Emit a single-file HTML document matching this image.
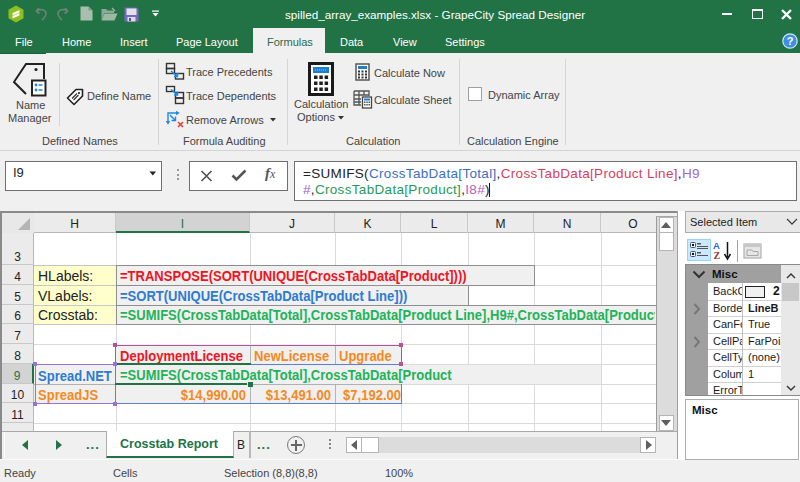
<!DOCTYPE html>
<html><head><meta charset="utf-8">
<style>
*{margin:0;padding:0;box-sizing:border-box}
html,body{width:800px;height:482px;overflow:hidden;background:#f0f0f0;font-family:"Liberation Sans",sans-serif;}
.a{position:absolute;white-space:nowrap}
.t{font-size:11px;color:#444;line-height:14px}
.wt{color:#fff;font-size:11px;line-height:14px}
.sep{position:absolute;width:1px;background:#d5d5d5}
.ch{position:absolute;top:213px;height:20px;font-size:12px;line-height:22px;text-align:center;color:#222;background:#ebebeb;border-right:1px solid #c8c8c8;border-bottom:1px solid #b8b8b8}
.ch.sel{background:#d3d3d3;border-bottom:2px solid #217346;color:#217346}
.rh{position:absolute;left:2px;width:32px;font-size:12px;text-align:center;color:#222;background:#ebebeb;border-bottom:1px solid #c8c8c8;border-right:1px solid #b8b8b8;overflow:hidden}
.rh span{position:absolute;left:0;right:0;bottom:0px;line-height:14px}
.rh.sel{background:#d3d3d3;border-right:2px solid #217346;color:#217346}
.gv{position:absolute;top:233px;width:1px;height:198px;background:#dadada}
.gh{position:absolute;left:34px;width:622px;height:1px;background:#dadada}
.cell{position:absolute;font-weight:bold;font-size:14px;line-height:16px;transform:scaleX(.93);transform-origin:0 0}
.cell.r{transform-origin:100% 0}
</style></head><body>
<!-- green title + tabs -->
<div class="a" style="left:0;top:0;width:800px;height:53px;background:#217346"></div>
<div class="a wt" style="left:285px;top:8px;font-size:11.7px">spilled_array_examples.xlsx - GrapeCity Spread Designer</div>
<!-- tabs -->
<div class="a wt" style="left:15px;top:35px">File</div>
<div class="a wt" style="left:62px;top:35px">Home</div>
<div class="a wt" style="left:120px;top:35px">Insert</div>
<div class="a wt" style="left:176px;top:35px">Page Layout</div>
<div class="a" style="left:253px;top:28px;width:72px;height:25px;background:#f0f0f0"></div>
<div class="a t" style="left:267px;top:35px;color:#2b6b4f">Formulas</div>
<div class="a wt" style="left:340px;top:35px">Data</div>
<div class="a wt" style="left:393px;top:35px">View</div>
<div class="a wt" style="left:445px;top:35px">Settings</div>

<!-- ribbon -->
<div class="a" style="left:0;top:53px;width:800px;height:98px;background:#f0f0f0;border-bottom:1px solid #d4d4d4"></div>
<div class="a t" style="left:16px;top:98px">Name</div>
<div class="a t" style="left:8px;top:111px">Manager</div>
<div class="sep" style="left:59px;top:63px;height:63px"></div>
<div class="a t" style="left:87px;top:89px">Define Name</div>
<div class="a t" style="left:42px;top:134px">Defined Names</div>
<div class="sep" style="left:158px;top:59px;height:86px"></div>
<div class="a t" style="left:186px;top:65px">Trace Precedents</div>
<div class="a t" style="left:186px;top:89px">Trace Dependents</div>
<div class="a t" style="left:186px;top:113px">Remove Arrows</div>
<div class="a t" style="left:183px;top:134px">Formula Auditing</div>
<div class="sep" style="left:287px;top:59px;height:86px"></div>
<div class="a t" style="left:294px;top:97px">Calculation</div>
<div class="a t" style="left:297px;top:110px">Options</div>
<div class="a t" style="left:374px;top:66px">Calculate Now</div>
<div class="a t" style="left:374px;top:93px">Calculate Sheet</div>
<div class="a t" style="left:346px;top:134px">Calculation</div>
<div class="sep" style="left:459px;top:59px;height:86px"></div>
<div class="a" style="left:468px;top:87px;width:14px;height:14px;background:#fff;border:1px solid #a0a0a0"></div>
<div class="a t" style="left:488px;top:88px">Dynamic Array</div>
<div class="a t" style="left:467px;top:134px">Calculation Engine</div>
<div class="sep" style="left:565px;top:59px;height:86px"></div>

<div class="a" style="left:0;top:53px;width:46px;height:1px;background:#1d5e3a"></div>
<!-- formula bar -->
<div class="a" style="left:5px;top:161px;width:157px;height:30px;background:#fff;border:1px solid #707070"></div>
<div class="a" style="left:13px;top:165px;font-size:13px;color:#222">I9</div>
<div class="a" style="left:189px;top:161px;width:99px;height:30px;background:#fff;border:1px solid #707070"></div>
<div class="a" style="left:294px;top:161px;width:503px;height:40px;background:#fff;border:1px solid #707070"></div>
<div class="a" style="left:303px;top:166px;font-size:13.5px;line-height:16px;letter-spacing:0.32px;color:#222">=SUMIFS(<span style="color:#3b6fc4">CrossTabData[Total]</span>,<span style="color:#d8415c">CrossTabData[Product Line]</span>,<span style="color:#9a66d6">H9</span><br><span style="color:#9b59d0">#</span>,<span style="color:#1f9a5a">CrossTabData[Product]</span>,<span style="color:#b85cc0">I8#</span>)<span style="display:inline-block;width:1px;height:14px;background:#111;vertical-align:-3px;margin-left:-0.5px"></span></div>

<!-- grid -->
<div class="a" style="left:0;top:211px;width:678px;height:249px;background:#e8e8e8;border-top:2px solid #8a8a8a;border-left:2px solid #8a8a8a"></div>
<div class="a" style="left:34px;top:233px;width:622px;height:198px;background:#fff"></div>

<!-- gridcontent -->
<svg class="a" style="left:17px;top:217px" width="14" height="14"><path d="M13 1 L13 13 L1 13 Z" fill="#b4b4b4"/></svg>
<div class="ch" style="left:34px;width:82px">H</div>
<div class="ch sel" style="left:116px;width:134px">I</div>
<div class="ch" style="left:250px;width:85px">J</div>
<div class="ch" style="left:335px;width:66px">K</div>
<div class="ch" style="left:401px;width:67px">L</div>
<div class="ch" style="left:468px;width:66px">M</div>
<div class="ch" style="left:534px;width:67px">N</div>
<div class="ch" style="left:601px;width:65px">O</div>
<div class="rh" style="top:233px;height:32px"><span>3</span></div>
<div class="rh" style="top:265px;height:20px"><span>4</span></div>
<div class="rh" style="top:285px;height:20px"><span>5</span></div>
<div class="rh" style="top:305px;height:19px"><span>6</span></div>
<div class="rh" style="top:324px;height:20px"><span>7</span></div>
<div class="rh" style="top:344px;height:20px"><span>8</span></div>
<div class="rh sel" style="top:364px;height:20px"><span>9</span></div>
<div class="rh" style="top:384px;height:19px"><span>10</span></div>
<div class="rh" style="top:403px;height:20px"><span>11</span></div>
<div class="rh" style="top:423px;height:20px"><span style="bottom:-2px">12</span></div>
<div class="gv" style="left:116px"></div>
<div class="gv" style="left:250px"></div>
<div class="gv" style="left:335px"></div>
<div class="gv" style="left:401px"></div>
<div class="gv" style="left:468px"></div>
<div class="gv" style="left:534px"></div>
<div class="gv" style="left:601px"></div>
<div class="gh" style="top:265px"></div>
<div class="gh" style="top:285px"></div>
<div class="gh" style="top:305px"></div>
<div class="gh" style="top:324px"></div>
<div class="gh" style="top:344px"></div>
<div class="gh" style="top:364px"></div>
<div class="gh" style="top:384px"></div>
<div class="gh" style="top:403px"></div>
<div class="gh" style="top:423px"></div>

<!-- cells -->
<div class="a" style="left:34px;top:265px;width:83px;height:60px;background:#ffffcc;border:1px solid #c4c4c4;border-left:none"></div>
<div class="a" style="left:34px;top:285px;width:82px;height:1px;background:#c8c8c8"></div>
<div class="a" style="left:34px;top:305px;width:82px;height:1px;background:#c8c8c8"></div>
<div class="cell" style="left:38px;top:268px;font-weight:normal;color:#222;transform:none">HLabels:</div>
<div class="cell" style="left:38px;top:288px;font-weight:normal;color:#222;transform:none">VLabels:</div>
<div class="cell" style="left:38px;top:307px;font-weight:normal;color:#222;transform:none">Crosstab:</div>
<!-- spill boxes -->
<div class="a" style="left:116px;top:265px;width:419px;height:21px;background:#f0f0f0;border:1px solid #8e8e8e"></div>
<div class="a" style="left:116px;top:285px;width:353px;height:21px;background:#f0f0f0;border:1px solid #8e8e8e"></div>
<div class="a" style="left:116px;top:305px;width:545px;height:20px;background:#f0f0f0;border:1px solid #8e8e8e;border-right:none"></div>
<div class="cell" style="left:120px;top:268px;color:#f0141e">=TRANSPOSE(SORT(UNIQUE(CrossTabData[Product])))</div>
<div class="cell" style="left:120px;top:288px;color:#2e7bd0">=SORT(UNIQUE(CrossTabData[Product Line]))</div>
<div class="a" style="left:117px;top:306px;width:538px;height:18px;overflow:hidden"><div class="cell" style="left:3px;top:1px;color:#1fb35a">=SUMIFS(CrossTabData[Total],CrossTabData[Product Line],H9#,CrossTabData[Product],I8#)</div></div>
<!-- row 8-10 -->
<div class="a" style="left:116px;top:344px;width:286px;height:20px;background:#f0f0f0"></div>
<div class="a" style="left:34px;top:364px;width:567px;height:20px;background:#f0f0f0"></div>
<div class="a" style="left:34px;top:384px;width:368px;height:19px;background:#f0f0f0"></div>
<div class="a" style="left:250px;top:345px;width:1px;height:19px;background:#b4b4b4"></div>
<div class="a" style="left:335px;top:345px;width:1px;height:19px;background:#b4b4b4"></div>
<div class="a" style="left:250px;top:385px;width:1px;height:18px;background:#b4b4b4"></div>
<div class="a" style="left:335px;top:385px;width:1px;height:18px;background:#b4b4b4"></div>
<div class="a" style="left:116px;top:364px;width:485px;height:1px;background:#dadada"></div>
<div class="a" style="left:34px;top:384px;width:368px;height:1px;background:#dadada"></div>
<div class="cell" style="left:120px;top:348px;color:#f0141e">DeploymentLicense</div>
<div class="cell" style="left:254px;top:348px;color:#f58a1f">NewLicense</div>
<div class="cell" style="left:339px;top:348px;color:#f58a1f">Upgrade</div>
<div class="cell" style="left:38px;top:368px;color:#2e7bd0">Spread.NET</div>
<div class="cell" style="left:38px;top:387px;color:#f58a1f">SpreadJS</div>
<div class="a" style="left:117px;top:366px;width:484px;height:18px;overflow:hidden"><div class="cell" style="left:3px;top:1px;color:#1fb35a">=SUMIFS(CrossTabData[Total],CrossTabData[Product</div></div>
<div class="cell r" style="left:120px;top:387px;width:126px;text-align:right;color:#f58a1f">$14,990.00</div>
<div class="cell r" style="left:254px;top:387px;width:77px;text-align:right;color:#f58a1f">$13,491.00</div>
<div class="cell r" style="left:339px;top:387px;width:58px;text-align:right;color:#f58a1f">$7,192.00</div>
<!-- reference borders -->
<div class="a" style="left:34px;top:384px;width:82px;height:1px;background:#b0b0b0"></div>
<div class="a" style="left:251px;top:384px;width:150px;height:1px;background:#b0b0b0"></div>
<div class="a" style="left:115px;top:345px;width:287px;height:20px;border:1px solid #b8509a;border-bottom:none"></div>
<div class="a" style="left:35px;top:364px;width:81px;height:40px;border:1px solid #9a70d0;border-right:none"></div>
<div class="a" style="left:115px;top:364px;width:287px;height:40px;border:1px solid #5b7fd6;border-right:none"></div>
<div class="a" style="left:401px;top:384px;width:1px;height:20px;background:#5b7fd6"></div>
<div class="a" style="left:115px;top:363px;width:136px;height:2px;background:#217346"></div>
<div class="a" style="left:115px;top:383px;width:132px;height:2px;background:#217346"></div>
<div class="a" style="left:248px;top:382px;width:5px;height:5px;background:#217346"></div>
<div class="a" style="left:113px;top:343px;width:4px;height:4px;background:#b8509a"></div>
<div class="a" style="left:399px;top:343px;width:4px;height:4px;background:#b8509a"></div>
<div class="a" style="left:399px;top:362px;width:4px;height:4px;background:#b8509a"></div>
<div class="a" style="left:113px;top:362px;width:4px;height:4px;background:#9a70d0"></div>
<div class="a" style="left:33px;top:362px;width:4px;height:4px;background:#9a70d0"></div>
<div class="a" style="left:33px;top:402px;width:4px;height:4px;background:#9a70d0"></div>
<div class="a" style="left:113px;top:402px;width:4px;height:4px;background:#9a70d0"></div>
<!-- vertical scrollbar -->
<div class="a" style="left:656px;top:213px;width:21px;height:218px;background:#dcdcdc;border-left:1px solid #9a9a9a"></div>
<div class="a" style="left:656px;top:213px;width:21px;height:4px;background:#f0f0f0;border-bottom:1px solid #a8a8a8"></div>
<div class="a" style="left:659px;top:217px;width:15px;height:16px;background:#fff;border:1px solid #b4b4b4"></div>
<div class="a" style="left:661px;top:222px;width:0;height:0;border-left:5px solid transparent;border-right:5px solid transparent;border-bottom:6px solid #606060"></div>
<div class="a" style="left:659px;top:232px;width:15px;height:19px;background:#fff;border:1px solid #b4b4b4"></div>
<div class="a" style="left:659px;top:415px;width:15px;height:16px;background:#fff;border:1px solid #b4b4b4"></div>
<div class="a" style="left:661px;top:420px;width:0;height:0;border-left:5px solid transparent;border-right:5px solid transparent;border-top:6px solid #606060"></div>
<div class="a" style="left:677px;top:211px;width:1px;height:249px;background:#a0a0a0"></div>
<!-- sheet tab bar -->
<div class="a" style="left:2px;top:431px;width:675px;height:29px;background:#f0f0f0;border-top:1px solid #a8a8a8"></div>
<div class="a" style="left:4px;top:432px;width:1px;height:26px;background:#fafafa"></div>
<div class="a" style="left:0;top:459px;width:678px;height:1px;background:#fafafa"></div>
<div class="a" style="left:22px;top:440px;width:0;height:0;border-top:5px solid transparent;border-bottom:5px solid transparent;border-right:6px solid #217346"></div>
<div class="a" style="left:56px;top:440px;width:0;height:0;border-top:5px solid transparent;border-bottom:5px solid transparent;border-left:6px solid #217346"></div>
<div class="a" style="left:86px;top:437px;font-size:13px;font-weight:bold;color:#217346;letter-spacing:1px">...</div>
<div class="a" style="left:106px;top:431px;width:128px;height:27px;background:#fff;border-left:1px solid #b0b0b0;border-right:1px solid #b0b0b0;border-bottom:2px solid #217346"></div>
<div class="a" style="left:120px;top:436px;font-size:12.5px;font-weight:bold;color:#217346;line-height:16px">Crosstab Report</div>
<div class="a" style="left:237px;top:437px;font-size:12px;color:#222;line-height:16px">B</div>
<div class="a" style="left:249px;top:431px;width:2px;height:27px;background:#b8b8b8"></div>
<div class="a" style="left:257px;top:437px;font-size:13px;font-weight:bold;color:#217346;letter-spacing:1px">...</div>
<div class="a" style="left:287px;top:436px;width:18px;height:18px;border:1.5px solid #7a7a7a;border-radius:50%"></div>
<div class="a" style="left:290.5px;top:444px;width:11px;height:2px;background:#666"></div>
<div class="a" style="left:295px;top:439.5px;width:2px;height:11px;background:#666"></div>
<div class="a" style="left:329px;top:439px;width:2px;height:2px;background:#888"></div>
<div class="a" style="left:329px;top:443px;width:2px;height:2px;background:#888"></div>
<div class="a" style="left:329px;top:447px;width:2px;height:2px;background:#888"></div>
<div class="a" style="left:346px;top:437px;width:310px;height:16px;background:#dcdcdc"></div>
<div class="a" style="left:346px;top:437px;width:16px;height:16px;background:#fff;border:1px solid #b4b4b4"></div>
<div class="a" style="left:351px;top:440px;width:0;height:0;border-top:5px solid transparent;border-bottom:5px solid transparent;border-right:6px solid #606060"></div>
<div class="a" style="left:361px;top:437px;width:18px;height:16px;background:#fff;border:1px solid #b4b4b4"></div>
<div class="a" style="left:640px;top:437px;width:16px;height:16px;background:#fff;border:1px solid #b4b4b4"></div>
<div class="a" style="left:646px;top:440px;width:0;height:0;border-top:5px solid transparent;border-bottom:5px solid transparent;border-left:6px solid #606060"></div>
<!-- /gridcontent -->

<!-- right panel -->
<div class="a" style="left:678px;top:211px;width:122px;height:249px;background:#fff"></div>
<div class="a" style="left:685px;top:211px;width:115px;height:22px;background:#e8e8e8;border:1px solid #adadad;border-right:none"></div>
<div class="a" style="left:690px;top:215px;font-size:11px;color:#222;line-height:14px">Selected Item</div>
<svg class="a" style="left:786px;top:218px" width="12" height="8"><path d="M1 1 L6 6 L11 1" fill="none" stroke="#444" stroke-width="1.3"/></svg>
<div class="a" style="left:687px;top:239px;width:24px;height:22px;background:#cce8ff;border:1px solid #99d1ff"></div>
<div class="a" style="left:737px;top:240px;width:1px;height:22px;background:#a0a0a0"></div>
<!-- property grid -->
<div class="a" style="left:685px;top:264px;width:115px;height:132px;background:#a0a0a0;border:1px solid #8a8a8a;border-right:none"></div>
<div class="a" style="left:781px;top:265px;width:19px;height:130px;background:#e8e8e8"></div>
<div class="a" style="left:782px;top:283px;width:17px;height:18px;background:#c8c8c8"></div>
<svg class="a" style="left:786px;top:272px" width="10" height="7"><path d="M1 6 L5 2 L9 6" fill="none" stroke="#333" stroke-width="1.4"/></svg>
<svg class="a" style="left:786px;top:385px" width="10" height="7"><path d="M1 1 L5 5 L9 1" fill="none" stroke="#333" stroke-width="1.4"/></svg>
<svg class="a" style="left:692px;top:270px" width="14" height="9"><path d="M1.5 1.5 L7 7 L12.5 1.5" fill="none" stroke="#333" stroke-width="2"/></svg>
<div class="a" style="left:712px;top:266px;font-size:11.5px;font-weight:bold;color:#111;line-height:16px">Misc</div>
<div class="a" style="left:708px;top:283px;width:73px;height:112px;background:#fff"></div>
<svg class="a" style="left:693px;top:303px" width="8" height="12"><path d="M1.5 1 L6 6 L1.5 11" fill="none" stroke="#777" stroke-width="2"/></svg>
<svg class="a" style="left:693px;top:336px" width="8" height="12"><path d="M1.5 1 L6 6 L1.5 11" fill="none" stroke="#777" stroke-width="2"/></svg>
<div class="a" style="left:708px;top:283px;width:34px;height:16px;overflow:hidden"><div class="a" style="left:5px;top:1px;font-size:11px;line-height:14px;color:#1a1a1a">BackC(</div></div>
<div class="a" style="left:708px;top:300px;width:34px;height:16px;overflow:hidden"><div class="a" style="left:5px;top:1px;font-size:11px;line-height:14px;color:#1a1a1a">Borde</div></div>
<div class="a" style="left:743px;top:300px;width:38px;height:16px;overflow:hidden"><div class="a" style="left:5px;top:1px;font-size:11px;line-height:14px;color:#1a1a1a;font-weight:bold;">LineB</div></div>
<div class="a" style="left:708px;top:300px;width:73px;height:1px;background:#d0d0d0"></div>
<div class="a" style="left:708px;top:316px;width:34px;height:16px;overflow:hidden"><div class="a" style="left:5px;top:1px;font-size:11px;line-height:14px;color:#1a1a1a">CanFo</div></div>
<div class="a" style="left:743px;top:316px;width:38px;height:16px;overflow:hidden"><div class="a" style="left:5px;top:1px;font-size:11px;line-height:14px;color:#1a1a1a;">True</div></div>
<div class="a" style="left:708px;top:316px;width:73px;height:1px;background:#d0d0d0"></div>
<div class="a" style="left:708px;top:333px;width:34px;height:16px;overflow:hidden"><div class="a" style="left:5px;top:1px;font-size:11px;line-height:14px;color:#1a1a1a">CellPa</div></div>
<div class="a" style="left:743px;top:333px;width:38px;height:16px;overflow:hidden"><div class="a" style="left:5px;top:1px;font-size:11px;line-height:14px;color:#1a1a1a;">FarPoir</div></div>
<div class="a" style="left:708px;top:333px;width:73px;height:1px;background:#d0d0d0"></div>
<div class="a" style="left:708px;top:349px;width:34px;height:16px;overflow:hidden"><div class="a" style="left:5px;top:1px;font-size:11px;line-height:14px;color:#1a1a1a">CellTy</div></div>
<div class="a" style="left:743px;top:349px;width:38px;height:16px;overflow:hidden"><div class="a" style="left:5px;top:1px;font-size:11px;line-height:14px;color:#1a1a1a;">(none)</div></div>
<div class="a" style="left:708px;top:349px;width:73px;height:1px;background:#d0d0d0"></div>
<div class="a" style="left:708px;top:366px;width:34px;height:16px;overflow:hidden"><div class="a" style="left:5px;top:1px;font-size:11px;line-height:14px;color:#1a1a1a">Colum</div></div>
<div class="a" style="left:743px;top:366px;width:38px;height:16px;overflow:hidden"><div class="a" style="left:5px;top:1px;font-size:11px;line-height:14px;color:#1a1a1a;">1</div></div>
<div class="a" style="left:708px;top:366px;width:73px;height:1px;background:#d0d0d0"></div>
<div class="a" style="left:708px;top:382px;width:34px;height:16px;overflow:hidden"><div class="a" style="left:5px;top:1px;font-size:11px;line-height:14px;color:#1a1a1a">ErrorT</div></div>
<div class="a" style="left:708px;top:382px;width:73px;height:1px;background:#d0d0d0"></div>
<div class="a" style="left:742px;top:283px;width:1px;height:112px;background:#c0c0c0"></div>
<div class="a" style="left:745px;top:286px;width:20px;height:12px;background:#f0f0f0;border:1.5px solid #222"></div>
<div class="a" style="left:773px;top:284px;font-size:12px;font-weight:bold;line-height:14px;color:#111">2</div>
<!-- description -->
<div class="a" style="left:685px;top:399px;width:114px;height:61px;background:#fff;border:1px solid #adadad"></div>
<div class="a" style="left:692px;top:403px;font-size:11.5px;font-weight:bold;color:#111;line-height:14px">Misc</div>

<!-- title icons -->
<svg class="a" style="left:8px;top:5px" width="16" height="18"><path d="M8 0.5 L15.5 4.75 L15.5 13.25 L8 17.5 L0.5 13.25 L0.5 4.75 Z" fill="#8cbf1f"/><path d="M4.5 8 L11.5 5 L11.5 7.5 L4.5 10.5 Z M4.5 11 L11.5 8 L11.5 10.5 L4.5 13.5Z" fill="#f4fbe8"/></svg>
<svg class="a" style="left:33px;top:5px" width="16" height="16"><path d="M3 6 L6 3 M3 6 L6.5 8.5 M3.5 6 C7 4 12 4 13 8 C13.5 11 11 13 9 15" fill="none" stroke="#6f8277" stroke-width="1.6"/></svg>
<svg class="a" style="left:55px;top:5px" width="16" height="16"><path d="M13 6 L10 3 M13 6 L9.5 8.5 M12.5 6 C9 4 4 4 3 8 C2.5 11 5 13 7 15" fill="none" stroke="#6f8277" stroke-width="1.6"/></svg>
<svg class="a" style="left:80px;top:6px" width="13" height="15"><path d="M0.5 0.5 L8.5 0.5 L12.5 4.5 L12.5 14.5 L0.5 14.5 Z" fill="#a9bfae"/><path d="M8.5 0.5 L8.5 4.5 L12.5 4.5" fill="#7f9a86"/></svg>
<svg class="a" style="left:101px;top:7px" width="17" height="14"><path d="M0.5 2 L5 2 L6.5 3.5 L13 3.5 L13 6 L3.5 6 L0.5 13 Z" fill="#8ba996"/><path d="M3.5 6.5 L16.5 6.5 L13.5 13.5 L0.5 13.5 Z" fill="#9db9a6"/><path d="M11 1 L14 4" stroke="#9db9a6" stroke-width="1.2"/></svg>
<svg class="a" style="left:124px;top:7px" width="15" height="15"><path d="M0.5 0.5 L12.5 0.5 L14.5 2.5 L14.5 14.5 L0.5 14.5 Z" fill="#7a68bd"/><rect x="2.5" y="1.5" width="10" height="6.5" fill="#e2e2ea"/><rect x="3.5" y="10" width="8" height="4.5" fill="#dcdce6"/><rect x="5" y="11" width="2" height="3" fill="#5a4a9a"/></svg>
<svg class="a" style="left:151px;top:10px" width="9" height="8"><rect x="1" y="0.5" width="7" height="1.2" fill="#fff"/><path d="M1.5 3 L7.5 3 L4.5 6.5Z" fill="#fff"/></svg>
<!-- window controls -->
<div class="a" style="left:722px;top:13px;width:10px;height:2px;background:#fff"></div>
<div class="a" style="left:752px;top:9px;width:11px;height:10px;border:1.5px solid #fff;border-top-width:2.5px"></div>
<svg class="a" style="left:781px;top:9px" width="11" height="11"><path d="M1 1 L10 10 M10 1 L1 10" stroke="#fff" stroke-width="2.4"/></svg>
<svg class="a" style="left:782px;top:33px" width="16" height="16"><circle cx="8" cy="8" r="7.2" fill="#3d8fe0" stroke="#d0e6fa" stroke-width="1.2"/><text x="8" y="12.3" text-anchor="middle" font-family="Liberation Sans" font-weight="bold" font-size="11" fill="#fff">?</text></svg>
<!-- ribbon icons -->
<svg class="a" style="left:12px;top:62px" width="36" height="36"><path d="M14 32 L2 20 L14 2 L32 2 L32 17" fill="none" stroke="#222" stroke-width="2"/><circle cx="24" cy="7.5" r="1.6" fill="#222"/><rect x="20" y="18.5" width="13.5" height="15" fill="#fff" stroke="#222" stroke-width="2"/><circle cx="24" cy="23" r="1.4" fill="#1e88e5"/><circle cx="24" cy="28" r="1.4" fill="#1e88e5"/><path d="M26.5 23 L30.5 23 M26.5 28 L30.5 28" stroke="#1e88e5" stroke-width="1.3"/></svg>
<svg class="a" style="left:66px;top:88px" width="18" height="18"><path d="M1.5 10 L10 1.5 L16.5 1.5 L16.5 8 L8 16.5 Z" fill="#fff" stroke="#222" stroke-width="1.6" stroke-linejoin="round"/><circle cx="13" cy="5" r="1.1" fill="#222"/><path d="M6 10.5 L11 5.5 M7.5 12 L12.5 7" stroke="#333" stroke-width="1.2"/></svg>
<svg class="a" style="left:165px;top:62px" width="20" height="19"><rect x="1.5" y="1.5" width="8" height="5" fill="none" stroke="#333" stroke-width="1.4"/><rect x="1.5" y="6.5" width="8" height="5" fill="none" stroke="#333" stroke-width="1.4"/><rect x="10.5" y="11.5" width="8" height="5.5" fill="none" stroke="#333" stroke-width="1.4"/><path d="M6 9 L12 14" stroke="#1e88e5" stroke-width="1.6"/><path d="M9 14.5 L12.5 14.5 L12.5 11" fill="none" stroke="#1e88e5" stroke-width="1.5"/></svg>
<svg class="a" style="left:165px;top:85px" width="20" height="20"><rect x="1.5" y="1.5" width="8" height="5" fill="none" stroke="#333" stroke-width="1.4"/><rect x="10.5" y="7.5" width="8" height="5.5" fill="none" stroke="#333" stroke-width="1.4"/><rect x="10.5" y="13" width="8" height="5.5" fill="none" stroke="#333" stroke-width="1.4"/><path d="M6 4.5 L12 9.5" stroke="#1e88e5" stroke-width="1.6"/><path d="M9 10 L12.5 10 L12.5 6.5" fill="none" stroke="#1e88e5" stroke-width="1.5"/></svg>
<svg class="a" style="left:165px;top:109px" width="20" height="20"><path d="M3 14 L3 4 L12 4" fill="none" stroke="#1e88e5" stroke-width="1.4"/><path d="M0.8 12 L3 15.8 L5.2 12 Z M11 1.8 L14.8 4 L11 6.2Z" fill="#1e88e5"/><path d="M5 6 L10 11" stroke="#1e88e5" stroke-width="1.5"/><path d="M6.5 11.5 L10.5 11.5 L10.5 7.5" fill="none" stroke="#1e88e5" stroke-width="1.4"/><path d="M13 13 L18 18 M18 13 L13 18" stroke="#e53935" stroke-width="1.5"/></svg>
<svg class="a" style="left:270px;top:118px" width="6" height="4"><path d="M0 0 L6 0 L3 3.5Z" fill="#333"/></svg>
<svg class="a" style="left:308px;top:62px" width="26" height="34"><rect x="1.5" y="1.5" width="23" height="31" fill="#fff" stroke="#1a1a1a" stroke-width="3"/><rect x="5" y="5" width="16" height="6" fill="#1e7fd0"/><path d="M7 8 L19 8" stroke="#7fd0ff" stroke-width="1" stroke-dasharray="1 1"/><g fill="#1f1f1f"><rect x="6" y="13.5" width="3.5" height="3.5"/><rect x="11.3" y="13.5" width="3.5" height="3.5"/><rect x="16.6" y="13.5" width="3.5" height="3.5"/><rect x="6" y="19.5" width="3.5" height="3.5"/><rect x="11.3" y="19.5" width="3.5" height="3.5"/><rect x="16.6" y="19.5" width="3.5" height="3.5"/><rect x="6" y="25.5" width="3.5" height="3.5"/><rect x="11.3" y="25.5" width="3.5" height="3.5"/><rect x="16.6" y="25.5" width="3.5" height="3.5"/></g></svg>
<svg class="a" style="left:338px;top:116px" width="6" height="4"><path d="M0 0 L6 0 L3 3.5Z" fill="#333"/></svg>
<svg class="a" style="left:355px;top:63px" width="15" height="18"><rect x="1" y="1" width="13" height="16" fill="#fff" stroke="#555" stroke-width="1.5"/><rect x="3" y="3" width="9" height="3" fill="#1e7fd0"/><g fill="#333"><rect x="3" y="7.5" width="2" height="2"/><rect x="6.5" y="7.5" width="2" height="2"/><rect x="10" y="7.5" width="2" height="2"/><rect x="3" y="10.5" width="2" height="2"/><rect x="6.5" y="10.5" width="2" height="2"/><rect x="10" y="10.5" width="2" height="2"/><rect x="3" y="13.5" width="2" height="2"/><rect x="6.5" y="13.5" width="2" height="2"/><rect x="10" y="13.5" width="2" height="2"/></g></svg>
<svg class="a" style="left:353px;top:90px" width="20" height="19"><path d="M1 1 L16 1 L16 6 M1 1 L1 15 L8 15 M1 5 L16 5 M1 9 L8 9 M1 12 L8 12 M6 1 L6 15 M11 1 L11 5" fill="none" stroke="#555" stroke-width="1.3"/><rect x="9.5" y="7" width="9" height="11" fill="#fff" stroke="#444" stroke-width="1.3"/><rect x="11" y="8.5" width="6" height="2" fill="#1e7fd0"/><g fill="#555"><rect x="11" y="11.5" width="1.5" height="1.5"/><rect x="13.3" y="11.5" width="1.5" height="1.5"/><rect x="15.5" y="11.5" width="1.5" height="1.5"/><rect x="11" y="14" width="1.5" height="1.5"/><rect x="13.3" y="14" width="1.5" height="1.5"/><rect x="15.5" y="14" width="1.5" height="1.5"/></g></svg>
<!-- formula bar icons -->
<svg class="a" style="left:149px;top:171px" width="8" height="5"><path d="M0.5 0.5 L7 0.5 L3.75 4.5Z" fill="#222"/></svg>
<div class="a" style="left:176.5px;top:169px;width:2px;height:2px;background:#999"></div>
<div class="a" style="left:176.5px;top:173.5px;width:2px;height:2px;background:#999"></div>
<div class="a" style="left:176.5px;top:178px;width:2px;height:2px;background:#999"></div>
<svg class="a" style="left:200px;top:170px" width="13" height="12"><path d="M1.5 1 L11.5 11 M11.5 1 L1.5 11" stroke="#555" stroke-width="1.7"/></svg>
<svg class="a" style="left:231px;top:169px" width="16" height="13"><path d="M1.5 6.5 L5.5 10.5 L14.5 1.5" fill="none" stroke="#555" stroke-width="2.6"/></svg>
<div class="a" style="left:265px;top:164px;font-family:'Liberation Serif',serif;font-style:italic;font-size:15px;color:#555;line-height:18px;font-weight:bold">f<span style="font-size:12px;font-weight:normal">x</span></div>
<!-- panel toolbar icons -->
<svg class="a" style="left:689px;top:241px" width="21" height="18"><rect x="1.5" y="1.5" width="5" height="5" rx="1" fill="#fff" stroke="#3a5a7a" stroke-width="1"/><rect x="1.5" y="10.5" width="5" height="5" rx="1" fill="#fff" stroke="#3a5a7a" stroke-width="1"/><circle cx="4" cy="4" r="1.2" fill="#111"/><circle cx="4" cy="13" r="1.2" fill="#111"/><g fill="#555"><rect x="8" y="2" width="4" height="1.5"/><rect x="8" y="5" width="11" height="1"/><rect x="8" y="7" width="11" height="1"/><rect x="8" y="11" width="4" height="1.5"/><rect x="8" y="14" width="11" height="1"/></g></svg>
<svg class="a" style="left:713px;top:240px" width="20" height="21"><text x="0" y="9" font-family="Liberation Sans" font-weight="bold" font-size="9.5" fill="#2a6ad0">A</text><text x="0.5" y="19" font-family="Liberation Serif" font-weight="bold" font-size="10" fill="#9a3030">Z</text><path d="M14.5 2 L14.5 17" stroke="#111" stroke-width="1.5"/><path d="M11.5 14 L14.5 19 L17.5 14" fill="none" stroke="#111" stroke-width="1.5"/></svg>
<svg class="a" style="left:743px;top:243px" width="19" height="16"><rect x="1" y="1" width="17" height="14" fill="#e6e6e6" stroke="#b0b0b0" stroke-width="1.2"/><rect x="1" y="1" width="17" height="3" fill="#c8c8c8"/><path d="M4 7 L9 7 L10 8.5 L15 8.5 L15 12.5 L4 12.5Z" fill="none" stroke="#a8a8a8" stroke-width="1"/></svg>

<!-- status bar -->
<div class="a" style="left:0;top:460px;width:800px;height:22px;background:#f0f0f0"></div>
<div class="a t" style="left:4px;top:466px">Ready</div>
<div class="a t" style="left:113px;top:466px">Cells</div>
<div class="a t" style="left:224px;top:466px">Selection (8,8)(8,8)</div>
<div class="a t" style="left:385px;top:466px">100%</div>
</body></html>
